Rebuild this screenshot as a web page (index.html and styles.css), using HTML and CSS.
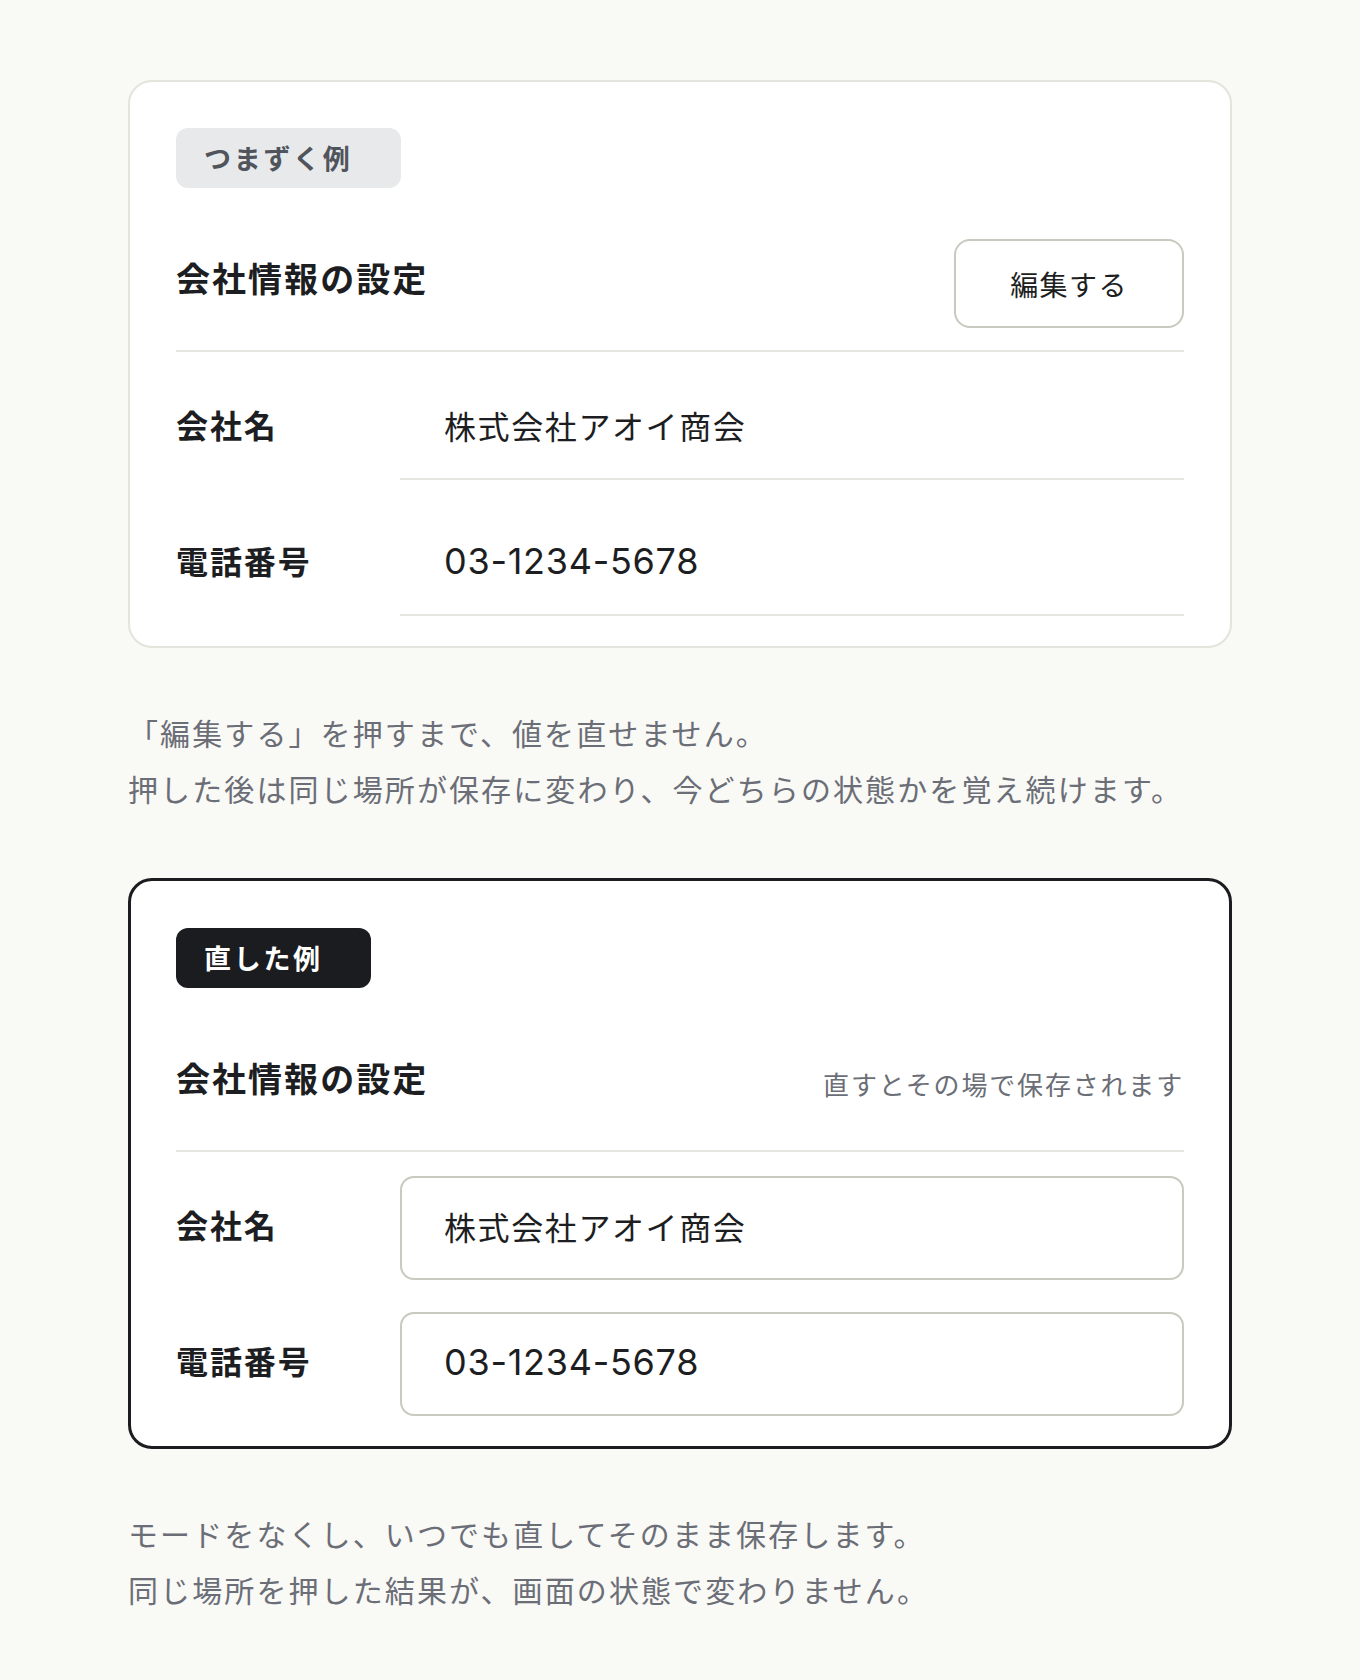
FILE: index.html
```html
<!DOCTYPE html>
<html lang="ja">
<head>
  <meta charset="UTF-8">
  <meta name="viewport" content="width=device-width, initial-scale=1.0">
  <title>会社情報の設定</title>
  <link rel="stylesheet" href="styles.css">
</head>

<body>
  <main class="page">
    <!-- Before -->
    <section class="example-card">
      <span class="example-badge">つまずく例</span>

      <div class="card-header">
        <h2 class="card-title">会社情報の設定</h2>
        <button class="edit-button" type="button">編集する</button>
      </div>

      <div class="field-row">
        <div class="field-label">会社名</div>
        <div class="field-value">株式会社アオイ商会</div>
      </div>
      <div class="field-row">
        <div class="field-label">電話番号</div>
        <div class="field-value field-value--tel">03-1234-5678</div>
      </div>
    </section>

    <p class="note">
      「編集する」を押すまで、値を直せません。<br>
      押した後は同じ場所が保存に変わり、今どちらの状態かを覚え続けます。
    </p>

    <!-- After -->
    <section class="example-card example-card--fixed">
      <span class="example-badge example-badge--dark">直した例</span>

      <div class="card-header">
        <h2 class="card-title">会社情報の設定</h2>
        <span class="save-hint">直すとその場で保存されます</span>
      </div>

      <div class="field-row">
        <label class="field-label" for="companyName">会社名</label>
        <input class="field-input" id="companyName" type="text" value="株式会社アオイ商会">
      </div>
      <div class="field-row">
        <label class="field-label" for="companyTel">電話番号</label>
        <input class="field-input field-value--tel" id="companyTel" type="text" value="03-1234-5678">
      </div>
    </section>

    <p class="note">
      モードをなくし、いつでも直してそのまま保存します。<br>
      同じ場所を押した結果が、画面の状態で変わりません。
    </p>
  </main>
</body>
</html>
```

FILE: styles.css
```css
* {
  margin: 0;
  padding: 0;
  box-sizing: border-box;
}

body {
  background: #f9f9f6;
  color: #1d1e22;
  font-family: "Noto Sans CJK JP", "Noto Sans", sans-serif;
  padding-top: 80px;
}

.page {
  width: 1104px;
  margin: 0 auto;
}

/* card */
.example-card {
  background: #fff;
  border: 2px solid #e4e4dc;
  border-radius: 24px;
  padding: 46px 46px 30px;
}

.example-card--fixed {
  border: 3px solid #1b1c20;
  padding: 47px 45px 30px;
}

.example-badge {
  display: inline-block;
  height: 60px;
  line-height: 60px;
  padding: 0 48px 0 28px;
  border-radius: 12px;
  background: #e8e9eb;
  color: #50545c;
  font-size: 27px;
  font-weight: 700;
  letter-spacing: 0.1em;
}

.example-badge--dark {
  background: #1b1c20;
  color: #fff;
}

.card-header {
  display: flex;
  justify-content: space-between;
  align-items: center;
  min-height: 113px;
  margin-top: 51px;
  padding-bottom: 22px;
  border-bottom: 2px solid #e6e6e0;
}

.card-title {
  font-size: 34px;
  font-weight: 700;
  letter-spacing: 0.06em;
  line-height: 1.3;
  margin-top: -10px;
}

.edit-button {
  width: 230px;
  height: 89px;
  background: #fff;
  border: 2px solid #c9c9bf;
  border-radius: 16px;
  color: #1d1e22;
  font-family: inherit;
  font-size: 28px;
  letter-spacing: 0.05em;
  cursor: pointer;
}

.save-hint {
  font-size: 26px;
  color: #6b6e76;
  letter-spacing: 0.07em;
}

/* rows */
.field-row {
  display: grid;
  grid-template-columns: 200px 1fr;
  gap: 24px;
  align-items: center;
  margin-top: 24px;
}

.field-row + .field-row {
  margin-top: 32px;
}

.field-label {
  font-size: 32px;
  font-weight: 700;
  letter-spacing: 0.06em;
  margin-top: -8px;
}

.field-value,
.field-input {
  height: 104px;
  font-size: 32px;
  letter-spacing: 0.05em;
  color: #1d1e22;
}

.field-value {
  display: flex;
  align-items: center;
  padding: 0 0 5px 44px;
  border-bottom: 2px solid #e6e6e0;
}

.field-input {
  width: 100%;
  padding: 0 42px 5px;
  border: 2px solid #c9c9bf;
  border-radius: 14px;
  background: #fff;
  font-family: inherit;
  outline: none;
}

.field-value--tel {
  font-family: Inter, "Noto Sans CJK JP", sans-serif;
  font-size: 36px;
  letter-spacing: 0.02em;
}

/* notes */
.note {
  margin: 56px 0 62px;
  font-size: 30px;
  line-height: 56px;
  letter-spacing: 0.07em;
  color: #6b6e76;
}
```
